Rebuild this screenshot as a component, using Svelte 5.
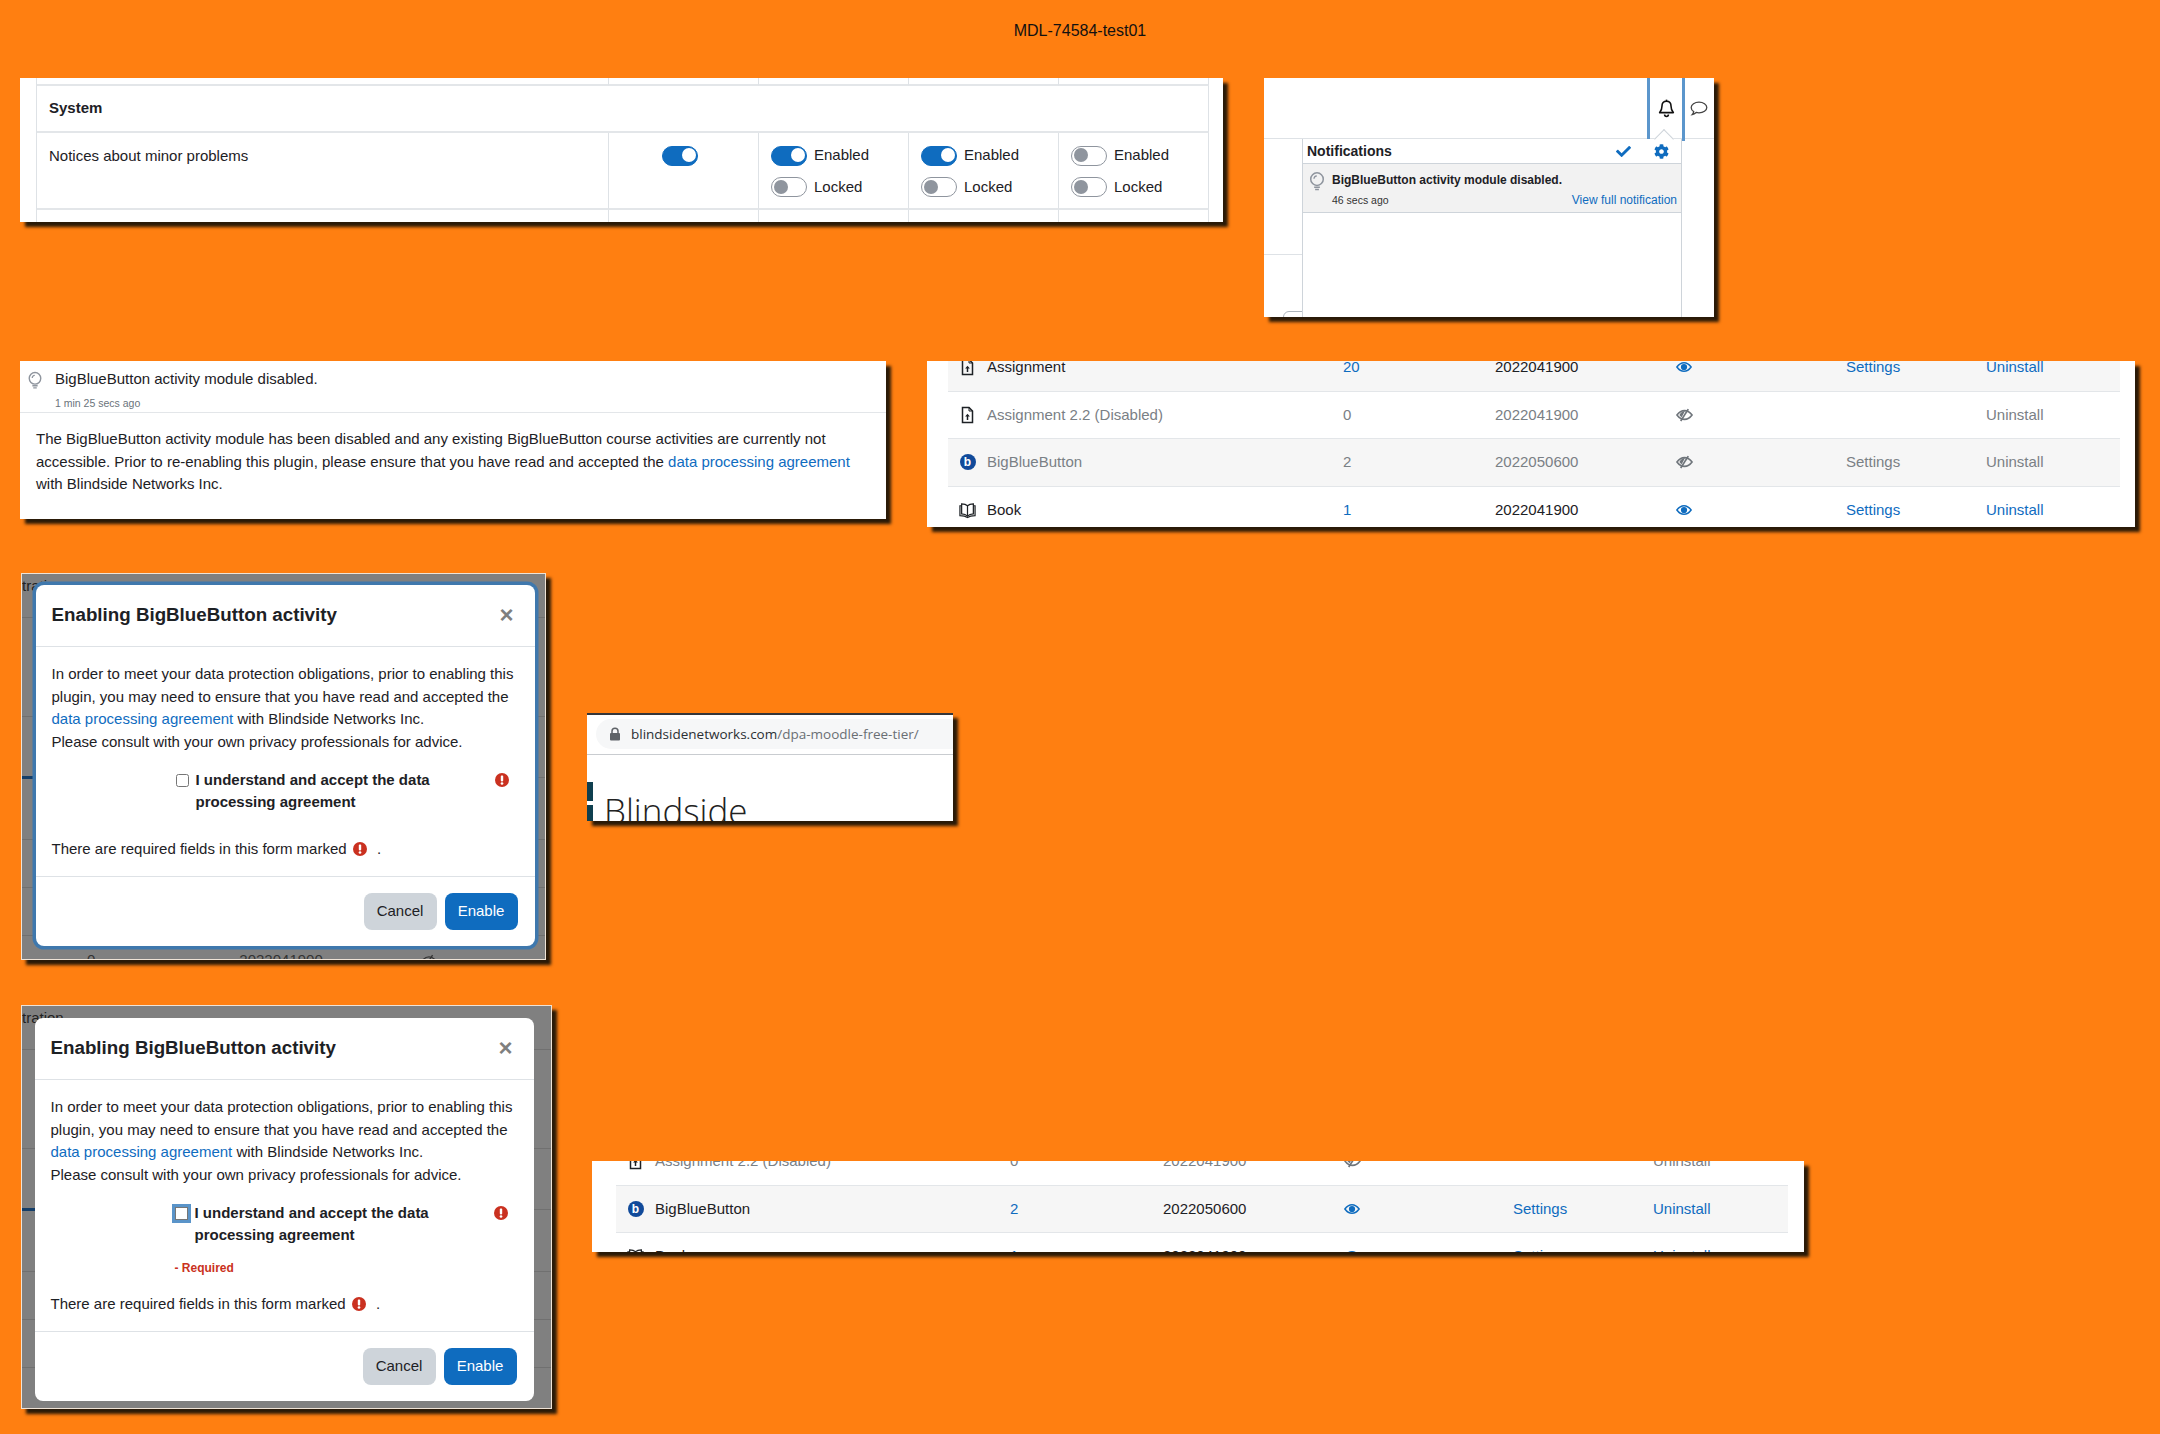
<script>
  const assignment = { icon: 'assign', name: 'Assignment', count: '20', version: '2022041900', on: true, settings: true, shade: true };
  const assignmentOld = { icon: 'assign', name: 'Assignment 2.2 (Disabled)', count: '0', version: '2022041900', on: false, settings: false, shade: false };
  const bbbOff = { icon: 'bbb', name: 'BigBlueButton', count: '2', version: '2022050600', on: false, settings: true, shade: true };
  const bbbOn = { icon: 'bbb', name: 'BigBlueButton', count: '2', version: '2022050600', on: true, settings: true, shade: true };
  const book = { icon: 'book', name: 'Book', count: '1', version: '2022041900', on: true, settings: true, shade: false };
  const firstTable = [assignment, assignmentOld, bbbOff, book];
  const lastTable = [assignmentOld, bbbOn, book];
  const roles = [
    { on: true, locked: false },
    { on: true, locked: false },
    { on: false, locked: false }
  ];
  const backdropRows = ['h1', 'h2', 'h3', 'h4', 'h5', 'h6'];
</script>

{#snippet bulb(cls)}
  <svg class={cls} viewBox="0 0 16 20" fill="none" stroke="#8f959e" stroke-width="1.6" aria-hidden="true">
    <circle cx="8" cy="7.5" r="6.6" />
    <path d="M4.8 7.2a3.4 3.4 0 0 1 3-3.2" stroke-width="1.4" />
    <path d="M5 16h6M6 18.4h4" />
  </svg>
{/snippet}

{#snippet eye(on)}
  {#if on}
    <svg class="eye" viewBox="0 0 18 12" aria-hidden="true">
      <path d="M1 6c2.2-3 4.9-4.8 8-4.8S14.8 3 17 6c-2.2 3-4.9 4.8-8 4.8S3.2 9 1 6z" fill="none" stroke="#0f6cbf" stroke-width="1.7" />
      <circle cx="9" cy="6" r="3.5" fill="#0f6cbf" />
    </svg>
  {:else}
    <svg class="eye slash" viewBox="0 0 18 14" aria-hidden="true">
      <path d="M1 7c2.2-3 4.9-4.6 8-4.6S14.8 4 17 7c-2.2 3-4.9 4.6-8 4.6S3.2 10 1 7z" fill="none" stroke="#6f757b" stroke-width="1.7" />
      <path d="M9.500 2.800C6.800 2.800 4.800 4.800 3.600 7c.7 1 1.500 1.800 2.400 2.400z" fill="#6f757b" />
      <path d="M5 13.400 13 .8" stroke="#6f757b" stroke-width="1.8" />
    </svg>
  {/if}
{/snippet}

{#snippet pluginIcon(kind)}
  {#if kind === 'assign'}
    <svg class="plug" viewBox="0 0 16 18" fill="none" stroke="#1d2125" stroke-width="1.5" aria-hidden="true">
      <path d="M3 1.500h6.500L13 5v11.500H3z" />
      <path d="M9.500 1.500V5H13" stroke-width="1" />
      <path d="M8 14V9" />
      <path d="M5.600 10.500 8 7.800l2.400 2.700z" fill="#1d2125" stroke="none" />
    </svg>
  {:else if kind === 'bbb'}
    <span class="bbb">b</span>
  {:else}
    <svg class="plug" viewBox="0 0 18 18" fill="none" stroke="#1d2125" stroke-width="1.3" aria-hidden="true">
      <path d="M9 4.500C7.500 3 5 2.400 2.800 2.400V13c2.200 0 4.700.8 6.200 2.500 1.500-1.700 4-2.500 6.200-2.500V2.400C13 2.400 10.500 3 9 4.500z" />
      <path d="M9 4.500v11" />
      <path d="M2.800 4.500H1V15c3 0 6 .5 8 2 2-1.500 5-2 8-2V4.500h-1.800" />
    </svg>
  {/if}
{/snippet}

{#snippet required()}
  <svg class="req" viewBox="0 0 14 14" aria-hidden="true">
    <circle cx="7" cy="7" r="7" fill="#ca3120" />
    <rect x="5.800" y="2.600" width="2.400" height="5.800" rx="0.800" fill="#fff" />
    <circle cx="7" cy="10.500" r="1.350" fill="#fff" />
  </svg>
{/snippet}

{#snippet toggle(on)}
  <span class="toggle" class:on></span>
{/snippet}

{#snippet pluginTable(rows)}
  <div class="ptable">
    {#each rows as r}
      <div class="prow" class:shade={r.shade} class:dim={!r.on}>
        <span class="picon">{@render pluginIcon(r.icon)}</span>
        <span class="pname">{r.name}</span>
        {#if r.on}<a href="#c">{r.count}</a>{:else}<span>{r.count}</span>{/if}
        <span class="pversion">{r.version}</span>
        <span class="peye">{@render eye(r.on)}</span>
        {#if r.settings}
          {#if r.on}<a href="#s">Settings</a>{:else}<span>Settings</span>{/if}
        {:else}
          <span></span>
        {/if}
        {#if r.on}<a href="#u">Uninstall</a>{:else}<span>Uninstall</span>{/if}
      </div>
    {/each}
  </div>
{/snippet}

{#snippet dialog(err)}
  <div class="backdrop">
    {#each backdropRows as h, i}
      <div class="bdrow {h}">
        {#if i === 0}<span class="bdtext">tration</span>{/if}
        {#if i === 2}<i class="bdmark"></i><i class="bdactive"></i>{/if}
      </div>
    {/each}
    {#if !err}
      <div class="bdlast">
        <span class="bd0">0</span>
        <span class="bd1">2022041900</span>
        <svg class="bdeye" viewBox="0 0 18 14" fill="none" stroke="#333" stroke-width="1.5" aria-hidden="true">
          <path d="M1 7.500C3 5 5.600 3 9 3s6 2 8 4.500" /><path d="M5 13 13 1" />
        </svg>
      </div>
    {/if}
  </div>
  <div class="modal" class:outlined={!err} class:err>
    <header class="mhead">
      <h2>Enabling BigBlueButton activity</h2>
      <span class="close">×</span>
    </header>
    <div class="mbody">
      <p>In order to meet your data protection obligations, prior to enabling this plugin, you may need to ensure that you have read and accepted the <a href="#d">data processing agreement</a> with Blindside Networks Inc.<br />Please consult with your own privacy professionals for advice.</p>
      <div class="frow">
        <input type="checkbox" class="check" class:focus={err} tabindex="-1" />
        <label class="flabel">I understand and accept the data processing agreement</label>
        {@render required()}
      </div>
      {#if err}<div class="ferror">- Required</div>{/if}
      <div class="rnote">There are required fields in this form marked {@render required()} <span class="dot">.</span></div>
    </div>
    <footer class="mfoot">
      <button class="btn cancel">Cancel</button>
      <button class="btn enable">Enable</button>
    </footer>
  </div>
{/snippet}

<div class="canvas">
  <h1 class="title">MDL-74584-test01</h1>

  <section class="panel p1">
    <div class="grid">
      <div class="cell strip"></div><div class="cell strip"></div><div class="cell strip"></div><div class="cell strip"></div><div class="cell strip"></div>
      <div class="sys">System</div>
      <div class="cell main">Notices about minor problems</div>
      <div class="cell first">{@render toggle(true)}</div>
      {#each roles as role}
        <div class="cell opts">
          <div class="opt">{@render toggle(role.on)}<span>Enabled</span></div>
          <div class="opt">{@render toggle(role.locked)}<span>Locked</span></div>
        </div>
      {/each}
      <div class="cell tail"></div><div class="cell tail"></div><div class="cell tail"></div><div class="cell tail"></div><div class="cell tail"></div>
    </div>
  </section>

  <section class="panel p2">
    <div class="topbar">
      <div class="bellcell">
        <svg class="bell" viewBox="0 0 16 18" fill="none" stroke="#111" stroke-width="1.5" aria-hidden="true">
          <path d="M8 2.200c-2.800 0-4.300 2-4.300 4.700 0 3.400-1 4.700-2.200 6h13c-1.200-1.300-2.200-2.600-2.200-6 0-2.700-1.500-4.700-4.300-4.700z" stroke-linejoin="round" />
          <path d="M8 .6v1.600" /><path d="M6.200 14.800a1.800 1.800 0 0 0 3.600 0" />
        </svg>
      </div>
      <div class="msgcell">
        <svg class="comment" viewBox="0 0 18 15" fill="none" stroke="#444" stroke-width="1.3" aria-hidden="true">
          <path d="M9 1.200c4.300 0 7.800 2.400 7.800 5.300S13.300 11.800 9 11.800c-1 0-1.900-.1-2.800-.4-1 .9-2.400 1.900-4 2.200.8-.9 1.300-2 1.500-3C2.100 9.700 1.200 8.200 1.200 6.500 1.200 3.600 4.700 1.200 9 1.200z" />
        </svg>
      </div>
    </div>
    <div class="below">
      <div class="leftstrip"><i class="lstop"></i><i class="lsround"></i></div>
      <div class="popover">
        <i class="arrow"></i>
        <div class="pophead">
          <strong>Notifications</strong>
          <svg class="pcheck" viewBox="0 0 512 512" aria-hidden="true"><path fill="#0f6cbf" d="M173.898 439.404l-166.4-166.4c-9.997-9.997-9.997-26.206 0-36.204l36.203-36.204c9.997-9.998 26.207-9.998 36.204 0L192 312.69 432.095 72.596c9.997-9.997 26.207-9.997 36.204 0l36.203 36.204c9.997 9.997 9.997 26.206 0 36.204l-294.4 294.401c-9.998 9.997-26.207 9.997-36.204-.001z" /></svg>
          <svg class="pgear" viewBox="0 0 512 512" aria-hidden="true"><path fill="#0f6cbf" d="M487.4 315.7l-42.6-24.6c4.3-23.2 4.3-47 0-70.2l42.6-24.6c4.9-2.8 7.1-8.6 5.5-14-11.1-35.6-30-67.8-54.7-94.6-3.8-4.1-10-5.1-14.8-2.3L380.8 110c-17.9-15.4-38.5-27.3-60.8-35.1V25.8c0-5.6-3.9-10.5-9.4-11.7-36.7-8.2-74.3-7.8-109.2 0-5.5 1.2-9.4 6.1-9.4 11.7V75c-22.2 7.9-42.8 19.8-60.8 35.1L88.7 85.5c-4.9-2.8-11-1.9-14.8 2.3-24.7 26.7-43.6 58.9-54.7 94.6-1.7 5.4.6 11.2 5.5 14L67.3 221c-4.3 23.2-4.3 47 0 70.2l-42.6 24.6c-4.9 2.8-7.1 8.6-5.5 14 11.1 35.6 30 67.8 54.7 94.6 3.8 4.1 10 5.1 14.8 2.3l42.6-24.6c17.9 15.4 38.5 27.3 60.8 35.1v49.2c0 5.6 3.9 10.5 9.4 11.7 36.7 8.2 74.3 7.8 109.2 0 5.5-1.2 9.4-6.1 9.4-11.7v-49.2c22.2-7.9 42.8-19.8 60.8-35.1l42.6 24.6c4.9 2.8 11 1.9 14.8-2.3 24.7-26.7 43.6-58.9 54.7-94.6 1.5-5.5-.7-11.3-5.6-14.1zM256 336c-44.1 0-80-35.9-80-80s35.9-80 80-80 80 35.9 80 80-35.9 80-80 80z" /></svg>
        </div>
        <div class="note">
          {@render bulb('nbulb')}
          <div class="ntext">
            <strong>BigBlueButton activity module disabled.</strong>
            <div class="nmeta"><span class="ntime">46 secs ago</span><a href="#v">View full notification</a></div>
          </div>
        </div>
      </div>
    </div>
  </section>

  <section class="panel p3">
    <div class="nhead">
      {@render bulb('hbulb')}
      <div>
        <div class="ntitle">BigBlueButton activity module disabled.</div>
        <div class="ntimesm">1 min 25 secs ago</div>
      </div>
    </div>
    <p class="nbody">The BigBlueButton activity module has been disabled and any existing BigBlueButton course activities are currently not accessible. Prior to re-enabling this plugin, please ensure that you have read and accepted the <a href="#d">data processing agreement</a> with Blindside Networks Inc.</p>
  </section>

  <section class="panel p4">{@render pluginTable(firstTable)}</section>

  <section class="panel p5">{@render dialog(false)}</section>

  <section class="panel p6">{@render dialog(true)}</section>

  <section class="panel p7">
    <div class="browser">
      <div class="urlbar">
        <svg class="lock" viewBox="0 0 12 14" aria-hidden="true">
          <path d="M3 6V4.200a3 3 0 0 1 6 0V6" fill="none" stroke="#5f6368" stroke-width="1.5" />
          <rect x="1" y="6" width="10" height="7.500" rx="1" fill="#5f6368" />
        </svg>
        <span class="url">blindsidenetworks.com<span class="path">/dpa-moodle-free-tier/</span></span>
      </div>
    </div>
    <div class="site">
      <div class="logo"><i></i><i></i></div>
      <div class="brand">Blindside</div>
    </div>
  </section>

  <section class="panel p8">{@render pluginTable(lastTable)}</section>
</div>

<style>
  :global(body) {
    margin: 0;
  }
  .canvas {
    position: relative;
    width: 2160px;
    height: 1434px;
    overflow: hidden;
    background: #ff7f11;
    color: #1d2125;
    font-family: "Liberation Sans", Arial, sans-serif;
    font-size: 15px;
    line-height: 22.5px;
  }
  a {
    color: #0f6cbf;
    text-decoration: none;
  }
  p {
    margin: 0;
  }
  i {
    display: block;
  }
  .title {
    margin: 0;
    padding-top: 20px;
    text-align: center;
    font-size: 16px;
    font-weight: 400;
    line-height: 22px;
    color: #111;
  }
  .panel {
    position: absolute;
    overflow: hidden;
    background: #fff;
    box-shadow: 5px 5px 3px #2a1a08;
  }
  .p1 { left: 20px; top: 78px; width: 1203px; height: 144px; }
  .p2 { left: 1264px; top: 78px; width: 450px; height: 239px; }
  .p3 { left: 20px; top: 361px; width: 866px; height: 158px; }
  .p4 { left: 927px; top: 361px; width: 1208px; height: 166px; }
  .p5 { left: 21px; top: 573px; width: 525px; height: 387px; }
  .p6 { left: 21px; top: 1005px; width: 531px; height: 404px; }
  .p7 { left: 587px; top: 713px; width: 366px; height: 108px; }
  .p8 { left: 592px; top: 1161px; width: 1212px; height: 91px; }

  /* permissions table */
  .grid {
    display: grid;
    grid-template-columns: 572px 150px 150px 150px 150px;
    margin-left: 16px;
    width: 1172px;
    border-left: 1px solid #dee2e6;
  }
  .cell {
    border-right: 1px solid #dee2e6;
    box-sizing: border-box;
  }
  .strip {
    height: 8px;
    border-bottom: 2px solid #e3e6e9;
  }
  .sys {
    grid-column: 1 / -1;
    height: 47px;
    box-sizing: border-box;
    padding: 11px 12px;
    font-weight: 700;
    border-right: 1px solid #dee2e6;
    border-bottom: 2px solid #e3e6e9;
  }
  .cell.main,
  .cell.first,
  .cell.opts {
    height: 77px;
    border-bottom: 2px solid #e3e6e9;
  }
  .main {
    padding: 12px;
  }
  .first {
    padding: 12.5px 8px 0 0;
    text-align: center;
  }
  .opts {
    padding: 12.5px 0 0 12px;
    display: flex;
    flex-direction: column;
    gap: 11.5px;
  }
  .opt {
    display: flex;
    align-items: center;
    gap: 7px;
    height: 20px;
  }
  .tail {
    height: 12px;
  }
  .toggle {
    display: inline-block;
    position: relative;
    box-sizing: border-box;
    width: 36px;
    height: 20px;
    border-radius: 10px;
    border: 1.5px solid #8f959e;
    background: #fff;
  }
  .toggle::after {
    content: "";
    position: absolute;
    left: 2px;
    top: 1.5px;
    width: 14px;
    height: 14px;
    border-radius: 50%;
    background: #8f959e;
  }
  .toggle.on {
    background: #0f6cbf;
    border-color: #0f6cbf;
  }
  .toggle.on::after {
    left: auto;
    right: 1px;
    background: #fff;
  }

  /* notifications */
  .topbar {
    display: flex;
    justify-content: flex-end;
    height: 60px;
    border-bottom: 1px solid #dee2e6;
  }
  .bellcell {
    box-sizing: border-box;
    width: 38px;
    height: 63px;
    flex: none;
    display: flex;
    align-items: flex-start;
    justify-content: center;
    padding-top: 21px;
    border-left: 3px solid #5b96cc;
    border-right: 3px solid #5b96cc;
  }
  .bell {
    width: 17px;
    height: 19px;
  }
  .msgcell {
    width: 29px;
    flex: none;
    display: flex;
    justify-content: center;
    padding: 23px 2px 0 0;
    box-sizing: border-box;
  }
  .comment {
    width: 18px;
    height: 15px;
  }
  .below {
    display: flex;
    height: 178px;
  }
  .leftstrip {
    position: relative;
    width: 38px;
    flex: none;
  }
  .lstop {
    height: 115px;
    border-bottom: 1px solid #dee2e6;
  }
  .lsround {
    position: absolute;
    left: 19px;
    top: 172px;
    width: 24px;
    height: 20px;
    border: 1px solid #adb5bd;
    border-radius: 6px;
  }
  .popover {
    position: relative;
    z-index: 1;
    box-sizing: border-box;
    width: 380px;
    height: 178px;
    flex: none;
    background: #fff;
    border-left: 1px solid #ced4da;
    border-right: 1px solid #ced4da;
  }
  .arrow {
    position: absolute;
    left: 354px;
    top: -7px;
    width: 13px;
    height: 13px;
    background: #fff;
    border-top: 1px solid #ced4da;
    border-left: 1px solid #ced4da;
    transform: rotate(45deg);
  }
  .pophead {
    position: relative;
    display: flex;
    align-items: center;
    height: 24px;
    padding-left: 4px;
    font-size: 14px;
    border-bottom: 1px solid #ced4da;
  }
  .pophead strong {
    flex: 1;
  }
  .pcheck {
    width: 15px;
    height: 15px;
    margin-right: 23px;
  }
  .pgear {
    width: 15px;
    height: 15px;
    margin-right: 12px;
  }
  .note {
    display: flex;
    height: 48px;
    background: #f2f2f2;
    border-bottom: 1px solid #ced4da;
  }
  .nbulb {
    width: 16px;
    height: 19px;
    margin: 8px 7px 0 6px;
    flex: none;
  }
  .ntext {
    flex: 1;
    padding: 7px 4px 0 0;
    font-size: 12px;
    line-height: 18px;
  }
  .ntext strong {
    display: block;
    font-size: 12px;
  }
  .nmeta {
    display: flex;
    justify-content: space-between;
    align-items: center;
    margin-top: 2px;
  }
  .ntime {
    font-size: 10.5px;
    color: #333;
  }

  /* notification detail */
  .nhead {
    display: flex;
    height: 44px;
    border-bottom: 1.5px solid #e3e6e9;
    padding: 7px 0 0 8px;
  }
  .hbulb {
    width: 14px;
    height: 19px;
    margin: 3px 13px 0 0;
    flex: none;
  }
  .ntitle {
    line-height: 22px;
  }
  .ntimesm {
    margin-top: 5px;
    font-size: 10.5px;
    line-height: 16px;
    color: #6a737b;
  }
  .nbody {
    padding: 15px 16px 0;
  }

  /* plugin tables */
  .ptable {
    width: 1172px;
  }
  .p4 .ptable {
    margin: -17px 0 0 21px;
  }
  .p8 .ptable {
    margin: -23px 0 0 24px;
  }
  .prow {
    display: grid;
    align-items: center;
    height: 47.5px;
    box-sizing: border-box;
    border-bottom: 1.5px solid #e3e6e9;
  }
  .p4 .prow {
    grid-template-columns: 39px 356px 152px 181px 170px 140px 134px;
  }
  .p8 .prow {
    grid-template-columns: 39px 355px 153px 181px 169px 140px 135px;
  }
  .prow.shade {
    background: #f6f6f6;
  }
  .prow.dim {
    color: #7a8085;
  }
  .picon {
    display: flex;
    justify-content: center;
  }
  .plug {
    width: 17px;
    height: 18px;
  }
  .bbb {
    display: flex;
    align-items: center;
    justify-content: center;
    width: 16px;
    height: 16px;
    border-radius: 50%;
    background: #114a9a;
    color: #fff;
    font-size: 12px;
    font-weight: 700;
    line-height: 16px;
  }
  .eye {
    display: block;
    width: 16px;
    height: 12px;
  }
  .eye.slash {
    width: 17px;
    height: 14px;
  }

  /* dialog */
  .p5,
  .p6 {
    background: #808080;
    border: 1px solid #efe3d6;
    box-sizing: border-box;
  }
  .bdrow {
    position: relative;
    box-sizing: border-box;
    border-bottom: 1px solid #707070;
  }
  .h1 { height: 44px; }
  .h2 { height: 99px; }
  .h3 { height: 61px; }
  .h4 { height: 62px; }
  .h5 { height: 48px; }
  .h6 { height: 48px; }
  .bdtext {
    position: absolute;
    left: 0;
    top: 1px;
    color: #222;
  }
  .bdmark {
    position: absolute;
    left: 13px;
    top: 24px;
    width: 2px;
    height: 12px;
    background: #333;
  }
  .bdactive {
    position: absolute;
    left: 0;
    bottom: -2px;
    width: 16px;
    height: 3px;
    background: #143e69;
  }
  .bdlast {
    display: flex;
    align-items: center;
    height: 22px;
    margin-top: 13px;
    color: #333;
  }
  .bd0 { margin-left: 65px; }
  .bd1 { margin-left: 144px; }
  .bdeye {
    width: 16px;
    height: 13px;
    margin-left: 98px;
  }
  .modal {
    position: absolute;
    left: 13.5px;
    top: 11px;
    width: 499px;
    box-sizing: border-box;
    background: #fff;
    border-radius: 8px;
  }
  .modal.err {
    left: 12.5px;
    top: 12px;
  }
  .modal.outlined {
    box-shadow: 0 0 0 3.5px #3f78ad;
  }
  .mhead {
    display: flex;
    align-items: center;
    justify-content: space-between;
    height: 62px;
    box-sizing: border-box;
    padding: 0 21px 2px 16px;
    border-bottom: 1px solid #dee2e6;
  }
  .mhead h2 {
    margin: 0;
    font-size: 18.75px;
    font-weight: 700;
    line-height: 22px;
  }
  .close {
    font-size: 24px;
    font-weight: 700;
    color: #7f7f7f;
    line-height: 24px;
  }
  .mbody {
    padding: 16px;
  }
  .frow {
    display: flex;
    align-items: flex-start;
    padding-left: 124px;
    margin-top: 15.5px;
  }
  .check {
    appearance: none;
    box-sizing: border-box;
    width: 13px;
    height: 13px;
    margin: 5px 7px 0 0;
    flex: none;
    background: #fff;
    border: 1px solid #767676;
    border-radius: 2.5px;
  }
  .check.focus {
    border-radius: 0;
    box-shadow: 0 0 0 3px #5a94c9;
  }
  .flabel {
    width: 289px;
    flex: none;
    font-weight: 700;
  }
  .req {
    display: inline-block;
    flex: none;
    width: 14px;
    height: 14px;
    vertical-align: -2px;
  }
  .frow .req {
    margin: 4px 0 0 10px;
  }
  .ferror {
    margin: 12px 0 0 124px;
    font-size: 12px;
    font-weight: 700;
    line-height: 18px;
    color: #ca3120;
  }
  .rnote {
    margin-top: 24px;
  }
  .err .rnote {
    margin-top: 16px;
  }
  .rnote .req {
    margin-left: 2px;
  }
  .dot {
    margin-left: 6px;
  }
  .mfoot {
    display: flex;
    justify-content: flex-end;
    gap: 8px;
    padding: 16px 17px 16px 16px;
    border-top: 1px solid #dee2e6;
  }
  .btn {
    height: 37px;
    width: 73px;
    padding: 0;
    border: 0;
    border-radius: 8px;
    font: inherit;
  }
  .cancel {
    background: #ced4da;
    color: #1d2125;
  }
  .enable {
    background: #0f6cbf;
    color: #fff;
  }

  /* browser capture */
  .browser {
    height: 30px;
    border-top: 2px solid #35363a;
    border-bottom: 1px solid #c9ccd0;
    padding: 4px 0 5px 9px;
  }
  .urlbar {
    display: flex;
    align-items: center;
    height: 30px;
    padding-left: 13px;
    background: #f6f7f8;
    border-radius: 15px 0 0 15px;
  }
  .lock {
    width: 12px;
    height: 14px;
    margin-right: 10px;
  }
  .url {
    font-family: "Open Sans", sans-serif;
    font-size: 13.5px;
    color: #2b2f33;
  }
  .path {
    color: #6a6f74;
  }
  .site {
    display: flex;
    align-items: flex-start;
  }
  .logo {
    width: 6px;
    margin-top: 27px;
    flex: none;
  }
  .logo i {
    height: 19px;
    margin-bottom: 4px;
    background: #0f3f4f;
  }
  .brand {
    margin: 31px 0 0 11px;
    font-family: "Open Sans", sans-serif;
    font-size: 35px;
    font-weight: 300;
    line-height: 50px;
    color: #222;
  }
</style>
